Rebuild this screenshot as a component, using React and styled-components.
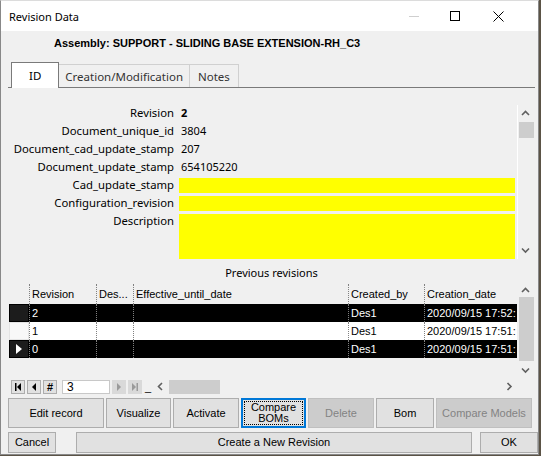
import styled, { createGlobalStyle } from 'styled-components';

const ui = `"Noto Sans", "Liberation Sans", sans-serif`;
const classic = `"Liberation Sans", Arial, sans-serif`;

const GlobalStyle = createGlobalStyle`
  html, body { margin: 0; padding: 0; }
  body { background: #5b5346; font-family: ${ui}; }
`;

const fields = [
  { label: 'Revision', value: '2', bold: true },
  { label: 'Document_unique_id', value: '3804' },
  { label: 'Document_cad_update_stamp', value: '207' },
  { label: 'Document_update_stamp', value: '654105220' },
  { label: 'Cad_update_stamp', edit: true },
  { label: 'Configuration_revision', edit: true },
  { label: 'Description', edit: true, tall: true },
];

const revisions = [
  { rev: '2', by: 'Des1', date: '2020/09/15 17:52:', dark: true },
  { rev: '1', by: 'Des1', date: '2020/09/15 17:51:' },
  { rev: '0', by: 'Des1', date: '2020/09/15 17:51:', dark: true, current: true },
];

const cols = '20px 67px 37px 215px 76px 93px';

const App = () => {
  return (
    <>
      <GlobalStyle />
      <Window>
        <TitleBar>
          <Title>Revision Data</Title>
          <WinControls>
            <WinButton $w={40}>
              <svg width="10" height="10" viewBox="0 0 10 10">
                <line x1="0" y1="5.5" x2="10" y2="5.5" stroke="#cfcfcf" strokeWidth="1" />
              </svg>
            </WinButton>
            <WinButton $w={42}>
              <svg width="10" height="10" viewBox="0 0 10 10">
                <rect x="0.5" y="0.5" width="9" height="9" fill="none" stroke="#000" strokeWidth="1" />
              </svg>
            </WinButton>
            <WinButton $w={45}>
              <svg width="11" height="11" viewBox="0 0 11 11">
                <path d="M0.5 0.5 L10.5 10.5 M10.5 0.5 L0.5 10.5" stroke="#000" strokeWidth="1" />
              </svg>
            </WinButton>
          </WinControls>
        </TitleBar>

        <Body>
          <Assembly>Assembly: SUPPORT - SLIDING BASE EXTENSION-RH_C3</Assembly>

          <TabStrip>
            <Tab $active>ID</Tab>
            <Tab>Creation/Modification</Tab>
            <Tab>Notes</Tab>
          </TabStrip>

          <Panel>
            <FormArea>
              <Fields>
                {fields.map((f) => (
                  <Field key={f.label} $tall={f.tall}>
                    <Label>{f.label}</Label>
                    {f.edit ? <EditBox $tall={f.tall} /> : <Value $bold={f.bold}>{f.value}</Value>}
                  </Field>
                ))}
              </Fields>
              <VScroll $lined>
                <Arrow $h={17}><Chevron dir="up" /></Arrow>
                <Track>
                  <Thumb style={{ height: 16 }} />
                </Track>
                <Arrow $h={17}><Chevron dir="down" /></Arrow>
              </VScroll>
            </FormArea>

            <Caption>Previous revisions</Caption>

            <GridArea>
              <GridBody>
                <GridRow $head>
                  <Cell $first />
                  <Cell>Revision</Cell>
                  <Cell>Des...</Cell>
                  <Cell>Effective_until_date</Cell>
                  <Cell>Created_by</Cell>
                  <Cell>Creation_date</Cell>
                </GridRow>
                {revisions.map((r) => (
                  <GridRow key={r.rev} $dark={r.dark}>
                    <RowHead $dark={r.dark}>
                      {r.current && (
                        <svg width="6" height="10" viewBox="0 0 6 10">
                          <path d="M0 0 L6 5 L0 10 Z" fill="#fff" />
                        </svg>
                      )}
                    </RowHead>
                    <Cell>{r.rev}</Cell>
                    <Cell />
                    <Cell />
                    <Cell>{r.by}</Cell>
                    <Cell>{r.date}</Cell>
                  </GridRow>
                ))}
              </GridBody>
              <VScroll>
                <Arrow $h={13}><Chevron dir="up" /></Arrow>
                <Track>
                  <Thumb style={{ height: 64 }} />
                </Track>
                <Arrow $h={13}><Chevron dir="down" /></Arrow>
              </VScroll>
            </GridArea>

            <NavRow>
              <Navigator>
                <NavButton><NavGlyph kind="first" /></NavButton>
                <NavButton><NavGlyph kind="prev" /></NavButton>
                <NavButton>#</NavButton>
                <NavInput>3</NavInput>
                <NavButton $disabled><NavGlyph kind="next" color="#9a9a9a" /></NavButton>
                <NavButton $disabled><NavGlyph kind="last" color="#9a9a9a" /></NavButton>
                <Underscore>_</Underscore>
              </Navigator>
              <HScroll>
                <HArrow><Chevron dir="left" /></HArrow>
                <HTrack>
                  <HThumb style={{ width: 51 }} />
                </HTrack>
                <HArrow><Chevron dir="right" /></HArrow>
              </HScroll>
              <Corner />
            </NavRow>
          </Panel>

          <ButtonRow>
            <Btn $w={96}>Edit record</Btn>
            <Btn $w={65}>Visualize</Btn>
            <Btn $w={66}>Activate</Btn>
            <Btn $w={65} $focus>
              <span>Compare<br />BOMs</span>
            </Btn>
            <Btn $w={66} $disabled>Delete</Btn>
            <Btn $w={58}>Bom</Btn>
            <Btn $w={96} $disabled>Compare Models</Btn>
          </ButtonRow>

          <BottomRow>
            <Btn $w={48} $h={21}>Cancel</Btn>
            <WideBtn $h={21}>Create a New Revision</WideBtn>
            <Btn $w={58} $h={21}>OK</Btn>
          </BottomRow>
        </Body>
      </Window>
    </>
  );
};

export default App;

const Chevron = ({ dir }) => {
  const paths = {
    up: 'M1 5 L4.5 1.5 L8 5',
    down: 'M1 1.5 L4.5 5 L8 1.5',
    left: 'M5 1 L1.5 4.5 L5 8',
    right: 'M1.5 1 L5 4.5 L1.5 8',
  };
  const wide = dir === 'up' || dir === 'down';
  return (
    <svg width={wide ? 9 : 7} height={wide ? 7 : 9} viewBox={wide ? '0 0 9 7' : '0 0 7 9'}>
      <path d={paths[dir]} fill="none" stroke="#606060" strokeWidth="1.6" />
    </svg>
  );
};

const NavGlyph = ({ kind, color = '#000' }) => {
  const shapes = {
    first: (
      <>
        <rect x="0" y="0" width="1.5" height="8" fill={color} />
        <path d="M6 0 L2 4 L6 8 Z" fill={color} />
      </>
    ),
    prev: <path d="M5 0 L1 4 L5 8 Z" fill={color} />,
    next: <path d="M1 0 L5 4 L1 8 Z" fill={color} />,
    last: (
      <>
        <path d="M0 0 L4 4 L0 8 Z" fill={color} />
        <rect x="4.5" y="0" width="1.5" height="8" fill={color} />
      </>
    ),
  };
  return (
    <svg width="6" height="8" viewBox="0 0 6 8">
      {shapes[kind]}
    </svg>
  );
};

const Window = styled.div`
  width: 539px;
  height: 455px;
  box-sizing: border-box;
  border: 1px solid #888888;
  border-top-color: #dcdcdc;
  background: #f0f0f0;
  display: flex;
  flex-direction: column;
  overflow: hidden;
`;

const TitleBar = styled.div`
  height: 30px;
  flex: none;
  background: #ffffff;
  display: flex;
  align-items: center;
`;

const Title = styled.div`
  padding-left: 8px;
  font-family: ${ui};
  font-size: 11px;
  color: #000;
  flex: 1;
`;

const WinControls = styled.div`
  display: flex;
  height: 100%;
  padding-right: 17px;
`;

const WinButton = styled.div`
  width: ${(p) => p.$w}px;
  height: 100%;
  display: flex;
  align-items: center;
  justify-content: center;
`;

const Body = styled.div`
  flex: 1;
  display: flex;
  flex-direction: column;
  background: #f0f0f0;
`;

const Assembly = styled.div`
  height: 24px;
  line-height: 24px;
  padding-left: 53px;
  font-family: ${classic};
  font-weight: bold;
  font-size: 11px;
  color: #000;
`;

const TabStrip = styled.div`
  margin-top: 7px;
  height: 25px;
  display: flex;
  align-items: flex-end;
  padding-left: 3px;
  margin-left: 7px;
  margin-right: 3px;
  border-bottom: 1px solid #7a7a7a;
`;

const Tab = styled.div`
  box-sizing: border-box;
  height: ${(p) => (p.$active ? 26 : 23)}px;
  margin-bottom: ${(p) => (p.$active ? -1 : 0)}px;
  padding: 0 ${(p) => (p.$active ? 17 : 6)}px;
  display: flex;
  align-items: center;
  justify-content: center;
  font-family: ${ui};
  font-size: 11.5px;
  color: ${(p) => (p.$active ? '#000' : '#333')};
  background: ${(p) => (p.$active ? '#ffffff' : '#f0f0f0')};
  border: 1px solid ${(p) => (p.$active ? '#7a7a7a' : '#d0d0d0')};
  border-bottom: none;
  & + & { border-left: none; }
  &:last-child { padding: 0 8px; }
`;

const Panel = styled.div`
  display: flex;
  flex-direction: column;
  padding: 0 4px 0 8px;
`;

const FormArea = styled.div`
  margin-top: 16px;
  height: 155px;
  display: flex;
`;

const Fields = styled.div`
  width: 506px;
  margin-right: 2px;
  display: flex;
  flex-direction: column;
`;

const Field = styled.div`
  display: grid;
  grid-template-columns: 165px 1fr;
  column-gap: 5px;
  height: ${(p) => (p.$tall ? 47 : 18)}px;
  align-items: start;
`;

const Label = styled.div`
  text-align: right;
  font-family: ${ui};
  font-size: 11.3px;
  line-height: 18px;
  color: #000;
  white-space: nowrap;
`;

const Value = styled.div`
  padding-left: 2px;
  font-family: ${ui};
  font-size: 11px;
  line-height: 18px;
  font-weight: ${(p) => (p.$bold ? 'bold' : 'normal')};
  color: #000;
`;

const EditBox = styled.div`
  margin-top: 2px;
  height: ${(p) => (p.$tall ? 45 : 15)}px;
  background: #ffff00;
`;

const VScroll = styled.div`
  width: 16px;
  flex: none;
  display: flex;
  flex-direction: column;
  background: #f0f0f0;
  border-left: 1px solid ${(p) => (p.$lined ? '#ffffff' : '#f0f0f0')};
  box-sizing: border-box;
  margin-top: ${(p) => (p.$lined ? 1 : 0)}px;
`;

const Arrow = styled.div`
  height: ${(p) => p.$h}px;
  flex: none;
  display: flex;
  align-items: center;
  justify-content: center;
`;

const Track = styled.div`
  flex: 1;
  display: flex;
  flex-direction: column;
  padding: 0 0 0 1px;
`;

const Thumb = styled.div`
  background: #cdcdcd;
  width: 15px;
`;

const Caption = styled.div`
  height: 20px;
  margin-top: 5px;
  line-height: 18px;
  text-align: center;
  font-family: ${ui};
  font-size: 11px;
  color: #000;
`;

const GridArea = styled.div`
  height: 93px;
  display: flex;
`;

const GridBody = styled.div`
  width: 508px;
  overflow: hidden;
  display: flex;
  flex-direction: column;
`;

const GridRow = styled.div`
  display: grid;
  grid-template-columns: ${cols};
  height: ${(p) => (p.$head ? 20 : 18)}px;
  flex: none;
  background: ${(p) => (p.$head ? 'transparent' : p.$dark ? '#000000' : '#ffffff')};
  color: ${(p) => (p.$dark ? '#ffffff' : '#000000')};
  font-family: ${classic};
  font-size: 11px;
  line-height: ${(p) => (p.$head ? 20 : 18)}px;
`;

const Cell = styled.div`
  padding-left: 2px;
  white-space: nowrap;
  overflow: hidden;
  border-left: ${(p) => (p.$first ? 'none' : '1px dotted #808080')};
`;

const RowHead = styled.div`
  box-sizing: border-box;
  display: flex;
  align-items: center;
  padding-left: 6px;
  background: ${(p) => (p.$dark ? '#1c1c1c' : '#f8f8f8')};
  border: 1px solid ${(p) => (p.$dark ? '#000' : '#e4e4e4')};
`;

const NavRow = styled.div`
  margin-top: 2px;
  height: 15px;
  display: flex;
  align-items: center;
`;

const Navigator = styled.div`
  display: flex;
  align-items: center;
  gap: 2px;
  padding-left: 2px;
  width: 141px;
`;

const NavButton = styled.div`
  width: 14px;
  height: 14px;
  box-sizing: border-box;
  display: flex;
  align-items: center;
  justify-content: center;
  background: ${(p) => (p.$disabled ? '#d9d9d9' : '#e1e1e1')};
  border: 1px solid ${(p) => (p.$disabled ? '#d9d9d9' : '#adadad')};
  font-family: ${classic};
  font-size: 11px;
  font-weight: bold;
  color: #000;
`;

const NavInput = styled.div`
  width: 48px;
  height: 14px;
  margin-left: 3px;
  box-sizing: border-box;
  background: #fff;
  border: 1px solid #c8c8c8;
  font-family: ${classic};
  font-size: 12px;
  line-height: 12px;
  padding-left: 4px;
  color: #000;
`;

const Underscore = styled.div`
  font-family: ${classic};
  font-size: 11px;
  line-height: 13px;
  align-self: flex-end;
  margin-left: 1px;
`;

const HScroll = styled.div`
  flex: 1;
  height: 15px;
  display: flex;
  align-items: center;
`;

const HArrow = styled.div`
  width: 17px;
  height: 15px;
  display: flex;
  align-items: center;
  justify-content: center;
`;

const HTrack = styled.div`
  flex: 1;
  height: 14px;
  display: flex;
`;

const HThumb = styled.div`
  height: 14px;
  background: #cdcdcd;
`;

const Corner = styled.div`
  width: 16px;
  height: 15px;
`;

const ButtonRow = styled.div`
  margin-top: 4px;
  display: flex;
  gap: 2px;
  padding-left: 7px;
`;

const BottomRow = styled.div`
  margin-top: 4px;
  display: flex;
  padding-left: 7px;
`;

const Btn = styled.div`
  position: relative;
  box-sizing: border-box;
  width: ${(p) => p.$w}px;
  height: ${(p) => p.$h || 30}px;
  flex: none;
  display: flex;
  align-items: center;
  justify-content: center;
  text-align: center;
  background: ${(p) => (p.$disabled ? '#cccccc' : '#e1e1e1')};
  border: 1px solid ${(p) => (p.$focus ? '#0078d7' : p.$disabled ? '#bfbfbf' : '#adadad')};
  box-shadow: ${(p) => (p.$focus ? 'inset 0 0 0 1px #0078d7' : 'none')};
  color: ${(p) => (p.$disabled ? '#838383' : '#000')};
  font-family: ${classic};
  font-size: 11px;
  line-height: 11px;
  ${(p) =>
    p.$focus &&
    `&::after {
      content: '';
      position: absolute;
      inset: 2px;
      border: 1px dotted #000;
    }`}
`;

const WideBtn = styled(Btn)`
  flex: 1;
  width: auto;
  margin: 0 8px 0 20px;
`;
